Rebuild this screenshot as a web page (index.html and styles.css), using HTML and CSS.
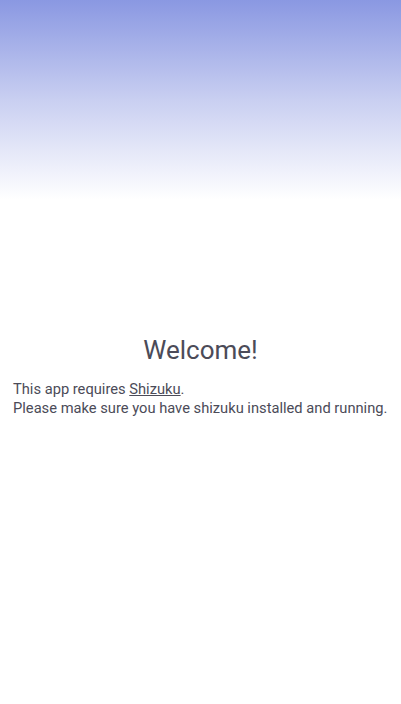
FILE: index.html
```html
<!DOCTYPE html>
<html lang="en">
<head>
    <meta charset="UTF-8">
    <meta name="viewport" content="width=device-width, initial-scale=1.0">
    <title>Welcome</title>
    <link rel="stylesheet" href="styles.css">
</head>
<body>
    <div class="header"></div>
    <div class="welcome">
        <h1>Welcome!</h1>
        <p>This app requires <a href="#">Shizuku</a>.<br>Please make sure you have shizuku installed and running.</p>
    </div>
</body>
</html>
```

FILE: styles.css
```css
* {
    margin: 0;
    padding: 0;
    box-sizing: border-box;
    font-family: Roboto, 'Noto Sans', sans-serif;
}

body {
    width: 401px;
    height: 704px;
    background: #ffffff;
    overflow: hidden;
}

.header {
    height: 200px;
    background: linear-gradient(to bottom, #8a98e2 0%, #c9cff1 50%, #ffffff 100%);
}

.welcome {
    padding: 133px 13px 0;
    color: #4b4b58;
}

h1 {
    text-align: center;
    font-size: 26px;
    font-weight: 400;
    line-height: 34px;
    margin-bottom: 13px;
}

p {
    font-size: 14.7px;
    line-height: 19px;
    white-space: nowrap;
}

a {
    color: inherit;
    text-decoration: underline;
}
```
